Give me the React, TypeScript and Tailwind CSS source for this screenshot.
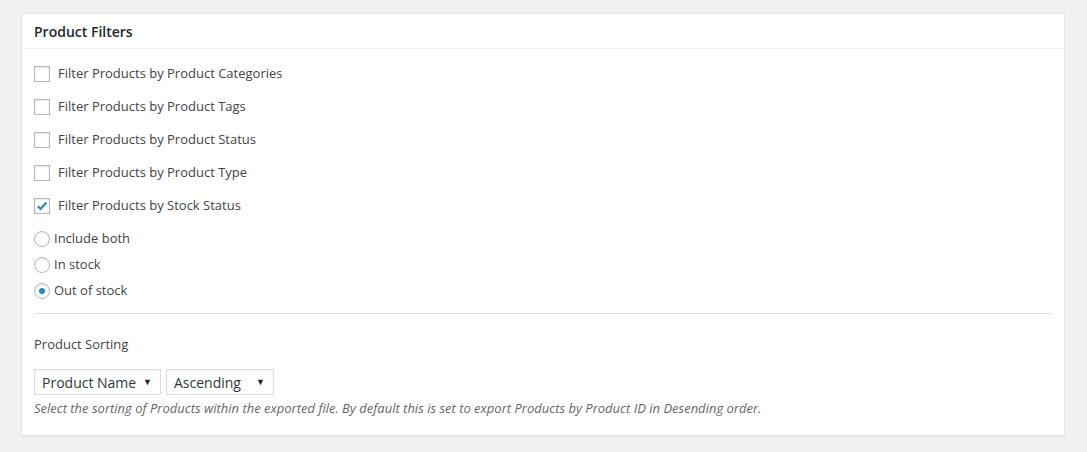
import React, { useState } from 'react';

const font = { fontFamily: '"Open Sans", "Noto Sans", sans-serif' };

const filters = [
  'Filter Products by Product Categories',
  'Filter Products by Product Tags',
  'Filter Products by Product Status',
  'Filter Products by Product Type',
  'Filter Products by Stock Status',
];

const stockOptions = ['Include both', 'In stock', 'Out of stock'];

const Checkbox: React.FC<{ checked: boolean; onClick: () => void }> = ({ checked, onClick }) => (
  <span
    onClick={onClick}
    className="w-4 h-4 border border-[#b4b9be] bg-white shadow-[inset_0_1px_2px_rgba(0,0,0,0.1)] flex items-center justify-center cursor-pointer"
  >
    {checked && (
      <svg width="12" height="12" viewBox="0 0 12 12">
        <path d="M1.8 6.2 4.6 9 10.4 2.6" fill="none" stroke="#1e8cbe" strokeWidth="2.2" strokeLinejoin="miter" />
      </svg>
    )}
  </span>
);

const Radio: React.FC<{ checked: boolean; onClick: () => void }> = ({ checked, onClick }) => (
  <span
    onClick={onClick}
    className="w-4 h-4 rounded-full border border-[#b4b9be] bg-white shadow-[inset_0_1px_2px_rgba(0,0,0,0.1)] flex items-center justify-center cursor-pointer"
  >
    {checked && <span className="w-[6px] h-[6px] rounded-full bg-[#1e8cbe]" />}
  </span>
);

const Select: React.FC<{ label: string; width: string }> = ({ label, width }) => (
  <div
    className={`${width} h-[26px] border border-[#ddd] bg-white shadow-[inset_0_1px_2px_rgba(0,0,0,0.07)] flex items-center justify-between pl-[7px] pr-[8px] text-[14px] text-[#32373c]`}
  >
    <span>{label}</span>
    <span className="text-[9px] text-[#222]">▼</span>
  </div>
);

const App: React.FC = () => {
  const [checked, setChecked] = useState([false, false, false, false, true]);
  const [stock, setStock] = useState(2);

  const toggle = (i: number) =>
    setChecked(prev => prev.map((v, j) => (j === i ? !v : v)));

  return (
    <div className="min-h-screen bg-[#f1f1f1] pt-[13px] pl-[21px] pr-[22px]" style={font}>
      <div className="bg-white border border-[#e5e5e5] shadow-[0_1px_1px_rgba(0,0,0,0.04)]">
        {/* Header */}
        <div className="h-[35px] border-b border-[#eee] px-3 flex items-center">
          <h2 className="text-[14px] font-semibold text-[#23282d]">Product Filters</h2>
        </div>

        {/* Body */}
        <div className="px-3 pt-[8px] pb-[17px] text-[13px] text-[#444]">
          {filters.map((label, i) => (
            <label key={label} className="h-[33px] flex items-center gap-2">
              <Checkbox checked={checked[i]} onClick={() => toggle(i)} />
              <span>{label}</span>
            </label>
          ))}

          <div className="mt-1">
            {stockOptions.map((label, i) => (
              <label key={label} className="h-[26px] flex items-center gap-1">
                <Radio checked={stock === i} onClick={() => setStock(i)} />
                <span>{label}</span>
              </label>
            ))}
          </div>

          <hr className="mt-[9px] border-0 border-t border-[#e1e1e1]" />

          <div className="h-[34px] mt-[14px] flex items-center">Product Sorting</div>

          <div className="mt-[7px] flex gap-[5px]">
            <Select label="Product Name" width="w-[127px]" />
            <Select label="Ascending" width="w-[108px]" />
          </div>

          <p className="mt-[3px] text-[13px] leading-[20px] italic text-[#666]">
            Select the sorting of Products within the exported file. By default this is set to export Products by Product ID in Desending order.
          </p>
        </div>
      </div>
    </div>
  );
};

export default App;
